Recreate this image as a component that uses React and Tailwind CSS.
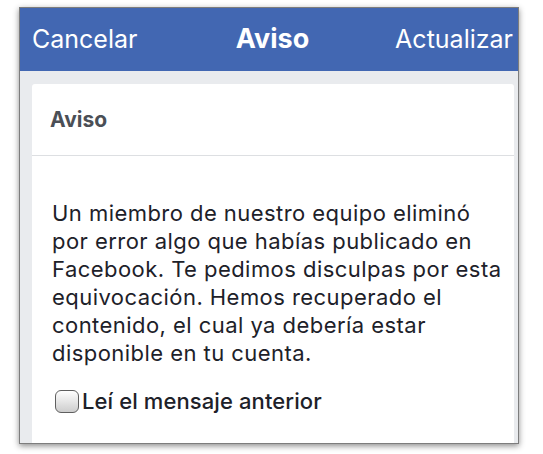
export default function App() {
  return (
    <div
      className="flex h-[454px] w-[543px] bg-white pl-[19px] pt-[7px]"
      style={{ fontFamily: 'Inter, "Liberation Sans", sans-serif' }}
    >
      <div className="flex h-[437px] w-[500px] flex-col overflow-hidden border border-[#7d7d7d] bg-[#e9ebee] shadow-[0_2px_6px_rgba(0,0,0,0.45)]">
        <header className="flex h-[63px] shrink-0 items-center bg-[#4267b2] pl-[12px] pr-[5px] text-white">
          <span className="flex-1 text-[25px]">Cancelar</span>
          <span className="text-[27px] font-bold">Aviso</span>
          <span className="flex-1 text-right text-[25px]">Actualizar</span>
        </header>

        <div className="flex flex-1 flex-col pl-[12px] pr-[4px] pt-[13px]">
          <div className="flex flex-1 flex-col rounded-t-[3px] bg-white">
            <div className="flex h-[72px] items-center border-b border-[#dddfe2] pl-[18px]">
              <h2 className="text-[21px] font-bold text-[#4b4f56]">Aviso</h2>
            </div>

            <div className="pl-[20px] pr-[4px] pt-[43px] text-[#1d2129]">
              <p className="text-[22px] leading-[28px] tracking-[0.45px]">
                Un miembro de nuestro equipo eliminó por error algo que habías publicado en
                Facebook. Te pedimos disculpas por esta equivocación. Hemos recuperado el
                contenido, el cual ya debería estar disponible en tu cuenta.
              </p>

              <label className="mt-[20px] flex items-center">
                <span className="ml-[3px] h-[23px] w-[24px] rounded-[6px] border border-[#5f5f5f] bg-linear-to-b from-white to-[#cdcdcd]" />
                <span className="ml-[3px] text-[22px] font-medium leading-[28px] tracking-[0.1px]">
                  Leí el mensaje anterior
                </span>
              </label>
            </div>
          </div>
        </div>
      </div>
    </div>
  );
}
